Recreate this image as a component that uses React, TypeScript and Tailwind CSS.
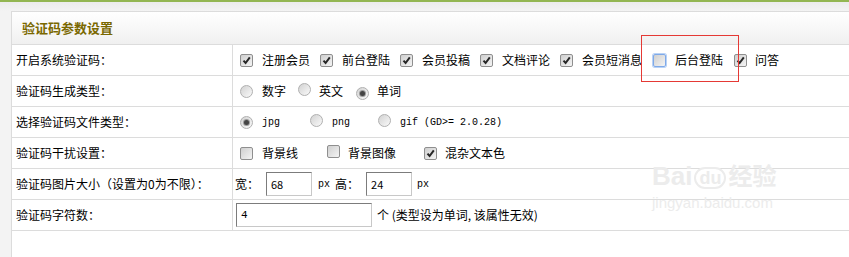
import React from 'react';

const cjk = { fontFamily: '"SimSun","Noto Sans CJK SC","Liberation Sans",sans-serif' };
const mono = { fontFamily: '"Liberation Mono","Noto Sans CJK SC",monospace' };

function Check({ checked, focus }: { checked?: boolean; focus?: boolean }) {
  return (
    <span
      className={`relative inline-flex w-[13px] h-[13px] shrink-0 items-center justify-center rounded-[2px] border bg-gradient-to-br from-[#cfcfcf] to-[#f4f4f4] ${
        focus ? 'border-[#7fa9e8] shadow-[0_0_0_1px_#b8d2f6]' : 'border-[#8f8f8f]'
      }`}
    >
      {checked && (
        <svg width="9" height="9" viewBox="0 0 9 9">
          <path d="M1.5 4.6 L3.6 7 L7.8 1.4" fill="none" stroke="#262626" strokeWidth="2" />
        </svg>
      )}
    </span>
  );
}

function Radio({ checked }: { checked?: boolean }) {
  return (
    <span className="inline-flex w-[13px] h-[13px] shrink-0 items-center justify-center rounded-full border border-[#b0b0b0] bg-gradient-to-br from-[#d2d2d2] to-[#fafafa]">
      {checked && <span className="w-[5px] h-[5px] rounded-full bg-[#444] shadow-[0_0_0_1px_#9c9c9c]" />}
    </span>
  );
}

function Row({ label, children }: { label: string; children: React.ReactNode }) {
  return (
    <div className="flex h-[31px] border-b border-[#dcdcdc]">
      <div className="w-[221px] shrink-0 border-r border-[#dcdcdc] pl-[4px] flex items-center">{label}</div>
      <div className="flex-1 flex items-center pl-[7px]">{children}</div>
    </div>
  );
}

function Input({ value, w }: { value: string; w: string }) {
  return (
    <span
      className={`${w} h-[24px] flex items-center pl-[4px] bg-white border border-t-[#7c7c7c] border-l-[#7c7c7c] border-b-[#c8c8c8] border-r-[#c8c8c8] text-[11px]`}
    >
      {value}
    </span>
  );
}

export default function App() {
  const sys = ['注册会员', '前台登陆', '会员投稿', '文档评论', '会员短消息'];
  return (
    <div className="relative w-[849px] h-[257px] overflow-hidden bg-[#f3f3f3] text-[12px] text-black" style={cjk}>
      <div className="h-[2px] bg-[#93b652]" />
      <div className="h-[9px] bg-gradient-to-b from-[#ececec] to-[#f3f3f3]" />
      <div className="ml-[11px] w-[900px] h-[246px] bg-white border-l border-t border-[#dcdcdc]">
        <div className="h-[33px] flex items-center pl-[10px] border-b border-[#dcdcdc] bg-gradient-to-b from-white to-[#f0f0f0]">
          <span className="font-bold text-[13px] text-[#7a6800]">验证码参数设置</span>
        </div>
        <Row label="开启系统验证码：">
          {sys.map((s, i) => (
            <span key={s} className={`flex items-center ${i ? 'ml-[10px]' : ''}`}>
              <Check checked />
              <span className="ml-[9px]">{s}</span>
            </span>
          ))}
          <span className="flex items-center ml-[11px]">
            <Check focus />
            <span className="ml-[9px]">后台登陆</span>
          </span>
          <span className="flex items-center ml-[11px]">
            <Check checked />
            <span className="ml-[8px]">问答</span>
          </span>
        </Row>
        <Row label="验证码生成类型：">
          <Radio />
          <span className="ml-[9px]">数字</span>
          <span className="ml-[12px]"><Radio /></span>
          <span className="ml-[8px]">英文</span>
          <span className="ml-[13px]"><Radio checked /></span>
          <span className="ml-[8px]">单词</span>
        </Row>
        <Row label="选择验证码文件类型：">
          <Radio checked />
          <span className="ml-[9px] text-[10px]" style={mono}>jpg</span>
          <span className="ml-[30px]"><Radio /></span>
          <span className="ml-[9px] text-[10px]" style={mono}>png</span>
          <span className="ml-[28px]"><Radio /></span>
          <span className="ml-[9px] text-[10px]" style={mono}>gif (GD&gt;= 2.0.28)</span>
        </Row>
        <Row label="验证码干扰设置：">
          <Check />
          <span className="ml-[9px]">背景线</span>
          <span className="ml-[29px]"><Check /></span>
          <span className="ml-[8px]">背景图像</span>
          <span className="ml-[28px]"><Check checked /></span>
          <span className="ml-[8px]">混杂文本色</span>
        </Row>
        <Row label="验证码图片大小（设置为0为不限）：">
          <span className="-ml-[5px]">宽：</span>
          <span className="ml-[7px]"><Input value="68" w="w-[46px]" /></span>
          <span className="ml-[6px] text-[10px]" style={mono}>px</span>
          <span className="ml-[5px]">高：</span>
          <span className="ml-[7px]"><Input value="24" w="w-[46px]" /></span>
          <span className="ml-[5px] text-[10px]" style={mono}>px</span>
        </Row>
        <Row label="验证码字符数：">
          <span className="-ml-[4px]">
            <span style={mono}><Input value="4" w="w-[136px]" /></span>
          </span>
          <span className="ml-[5px]">个 (类型设为单词, 该属性无效)</span>
        </Row>
      </div>
      <div className="absolute left-[641px] top-[35px] w-[98px] h-[47px] border border-[#e53935]" />
      <div className="absolute left-[652px] top-[163px] text-[#ececec] select-none" style={{ fontFamily: '"Liberation Sans","Noto Sans CJK SC",sans-serif' }}>
        <div className="flex items-end leading-none">
          <span className="text-[26px] font-bold">Bai</span>
          <span className="text-[18px] font-bold mx-[2px] px-[3px] rounded-full border-2 border-[#ececec]">du</span>
          <span className="text-[24px] font-bold">经验</span>
        </div>
        <div className="mt-[6px] text-[15px] leading-none">jingyan.baidu.com</div>
      </div>
    </div>
  );
}
